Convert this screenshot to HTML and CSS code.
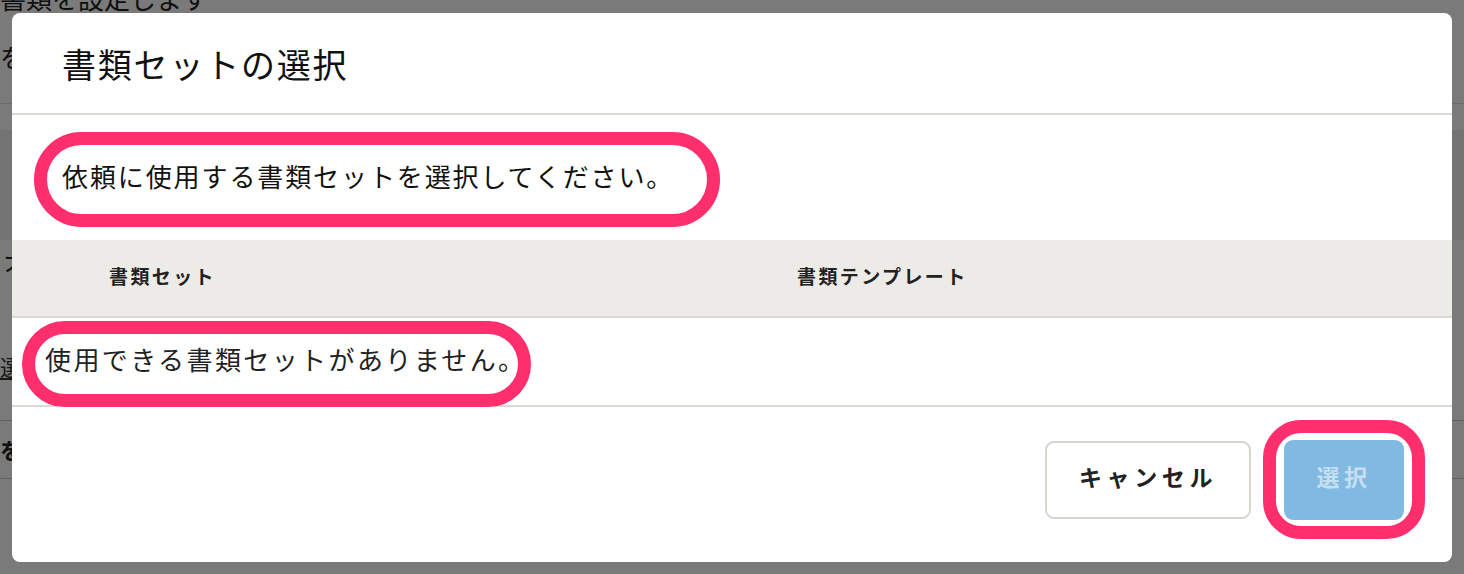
FILE: index.html
```html
<!DOCTYPE html>
<html lang="ja">
<head>
  <meta charset="UTF-8" />
  <meta name="viewport" content="width=device-width, initial-scale=1.0"/>
  <title>書類セットの選択</title>
  <link rel="stylesheet" href="styles.css">
</head>
<body>
  <div class="page">
    <div class="bg-title">書類を設定します</div>
    <div class="bg-text">を</div>
    <div class="bg-rule"></div>
    <div class="bg-band"></div>
    <div class="bg-text bg-ta">ナ</div>
    <div class="bg-link">選</div>
    <div class="bg-rule bg-rule-2"></div>
    <div class="bg-bold">を</div>
    <div class="bg-rule bg-rule-3"></div>
  </div>

  <div class="overlay"></div>

  <div class="modal">
    <div class="modal-header">
      <h1>書類セットの選択</h1>
    </div>

    <div class="modal-desc">
      <span class="mark mark-desc">依頼に使用する書類セットを選択してください。</span>
    </div>

    <div class="table">
      <div class="table-head">
        <div class="col-set">書類セット</div>
        <div class="col-tpl">書類テンプレート</div>
      </div>
      <div class="table-empty">
        <span class="mark mark-empty">使用できる書類セットがありません。</span>
      </div>
    </div>

    <div class="modal-footer">
      <button class="btn btn-cancel">キャンセル</button>
      <span class="mark mark-btn">
        <button class="btn btn-select" disabled>選択</button>
      </span>
    </div>
  </div>
</body>
</html>
```

FILE: styles.css
```css
body {
  margin: 0;
  padding: 0;
  background: #fff;
  font-family: "Noto Sans CJK JP", "Noto Sans", sans-serif;
  color: #222;
  overflow: hidden;
}

/* page behind the dialog */
.page {
  height: 574px;
}
.bg-title {
  font-size: 26px;
  line-height: 40px;
  margin-top: -22px;
}
.bg-text {
  font-size: 26px;
  line-height: 40px;
  margin-top: 19px;
}
.bg-rule {
  border-top: 1px solid #e4e4e4;
  margin-top: 26px;
}
.bg-band {
  height: 110px;
  margin-top: 26px;
  background: #f3f3f3;
}
.bg-ta {
  margin-top: 0;
  font-style: italic;
}
.bg-link {
  font-size: 22px;
  line-height: 32px;
  margin-top: 70px;
  text-decoration: underline;
  color: #333;
}
.bg-rule-2 {
  margin-top: 38px;
  border-top-color: #ccc;
}
.bg-bold {
  font-size: 22px;
  line-height: 32px;
  margin-top: 12px;
  font-weight: bold;
}
.bg-rule-3 {
  margin-top: 13px;
  border-top-color: #ccc;
}

.overlay {
  position: fixed;
  inset: 0;
  background: rgba(0, 0, 0, 0.52);
}

/* dialog */
.modal {
  position: absolute;
  top: 13px;
  left: 12px;
  width: 1440px;
  height: 549px;
  background: #fff;
  border-radius: 8px;
  display: flex;
  flex-direction: column;
}
.modal-header {
  height: 100px;
  padding-left: 50px;
  display: flex;
  align-items: center;
  border-bottom: 2px solid #dcd8d3;
}
.modal-header h1 {
  margin: 0;
  font-size: 34px;
  font-weight: normal;
  letter-spacing: 1.8px;
  color: #111;
}
.modal-desc {
  height: 125px;
  box-sizing: border-box;
  padding: 0 0 5px 50px;
  display: flex;
  align-items: center;
  font-size: 26px;
  letter-spacing: 1.9px;
  color: #111;
}

.table-head {
  height: 78px;
  box-sizing: border-box;
  padding-bottom: 5px;
  display: flex;
  align-items: center;
  background: #ecebe7;
  border-bottom: 2px solid #dcd8d3;
  font-size: 19px;
  font-weight: bold;
  letter-spacing: 2.4px;
  color: #222;
}
.col-set {
  width: 688px;
  padding-left: 97px;
}
.table-empty {
  height: 89px;
  box-sizing: border-box;
  padding: 0 0 7px 33px;
  display: flex;
  align-items: center;
  border-bottom: 2px solid #dcd8d3;
  font-size: 26px;
  letter-spacing: 2.4px;
  color: #222;
}

.modal-footer {
  display: flex;
  justify-content: flex-end;
  align-items: center;
  gap: 33px;
  padding: 33px 48px 0 0;
}
.btn {
  font-family: inherit;
  font-size: 23px;
  font-weight: bold;
  letter-spacing: 4.6px;
  border-radius: 9px;
  padding: 0 0 8px;
  cursor: pointer;
}
.btn-cancel {
  width: 206px;
  height: 78px;
  background: #fff;
  border: 2px solid #d8d4cf;
  color: #222;
}
.btn-select {
  display: block;
  width: 120px;
  height: 80px;
  background: #80bae2;
  border: none;
  color: #c6dff1;
  cursor: default;
}

/* red highlight marks drawn over the content */
.mark {
  position: relative;
  display: inline-block;
}
.mark::after {
  content: "";
  position: absolute;
  border: 13px solid #ff2f6e;
  border-radius: 48px;
  pointer-events: none;
}
.mark-desc::after {
  top: -25px;
  bottom: -33px;
  left: -28px;
  right: -46px;
}
.mark-empty::after {
  top: -19px;
  bottom: -30px;
  left: -23px;
  right: -4px;
}
.mark-btn::after {
  top: -20px;
  bottom: -19px;
  left: -21px;
  right: -21px;
  border-radius: 38px;
}
```
